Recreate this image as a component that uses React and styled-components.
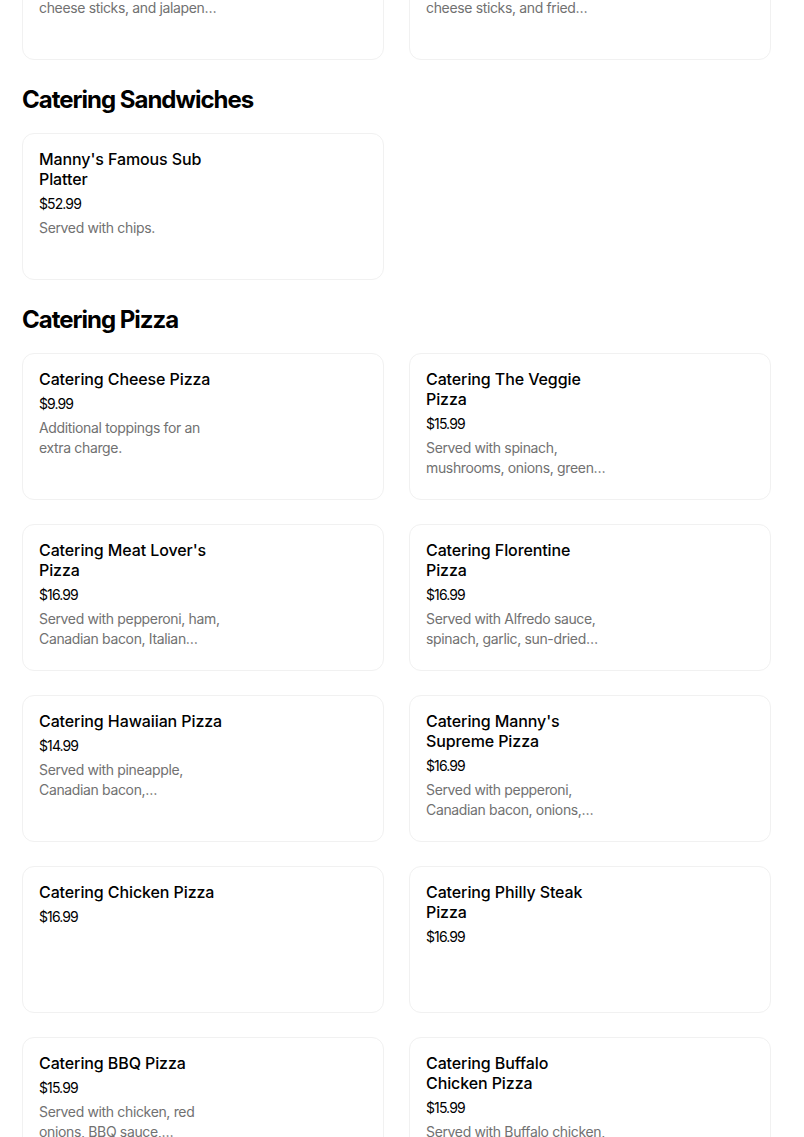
import styled, { createGlobalStyle } from "styled-components";

const GlobalStyle = createGlobalStyle`
  html, body {
    margin: 0;
    padding: 0;
    background: #ffffff;
  }
  body {
    font-family: Inter, "Liberation Sans", sans-serif;
    color: #000000;
    overflow: hidden;
  }
`;

const Page = styled.div`
  width: 804px;
  height: 1137px;
  overflow: hidden;
`;

// the page is scrolled: the previous section's last row is half off-screen
const Scroller = styled.div`
  margin-top: -87px;
  padding: 0 33px 0 22px;
`;

const Section = styled.section``;

const Heading = styled.h2`
  margin: 24px 0 17px;
  font-size: 24px;
  line-height: 32px;
  font-weight: 700;
  letter-spacing: -1px;
`;

const Grid = styled.div`
  display: grid;
  grid-template-columns: repeat(2, 1fr);
  gap: 24px 25px;
`;

const Card = styled.div`
  height: 147px;
  box-sizing: border-box;
  border: 1px solid #f1f1f1;
  border-radius: 12px;
  padding: 15px 16px 16px;
  display: flex;
  background: #ffffff;
`;

const Info = styled.div`
  width: 185px;
  display: flex;
  flex-direction: column;
`;

const Title = styled.div`
  font-size: 16px;
  line-height: 20px;
  font-weight: 500;
  letter-spacing: -0.1px;
  margin-bottom: 5px;
`;

const Price = styled.div`
  font-size: 14px;
  line-height: 20px;
  letter-spacing: -0.9px;
  margin-bottom: 4px;
`;

const Desc = styled.div`
  font-size: 14px;
  line-height: 20px;
  color: #717171;
  letter-spacing: -0.35px;
  display: -webkit-box;
  -webkit-line-clamp: 2;
  -webkit-box-orient: vertical;
  overflow: hidden;
`;

const sections = [
  {
    name: null,
    items: [
      {
        title: "Catering Appetizer Tray",
        price: "$39.99",
        desc: "Served with chicken tenders, cheese sticks, and jalapeno poppers.",
      },
      {
        title: "Catering Party Tray",
        price: "$44.99",
        desc: "Served with chicken wings, cheese sticks, and fried mushrooms.",
      },
    ],
  },
  {
    name: "Catering Sandwiches",
    items: [
      { title: "Manny's Famous Sub Platter", price: "$52.99", desc: "Served with chips." },
    ],
  },
  {
    name: "Catering Pizza",
    items: [
      { title: "Catering Cheese Pizza", price: "$9.99", desc: "Additional toppings for an extra charge." },
      {
        title: "Catering The Veggie Pizza",
        price: "$15.99",
        desc: "Served with spinach, mushrooms, onions, green peppers, tomatoes, and black olives.",
      },
      {
        title: "Catering Meat Lover's Pizza",
        price: "$16.99",
        desc: "Served with pepperoni, ham, Canadian bacon, Italian sausage, and ground beef.",
      },
      {
        title: "Catering Florentine Pizza",
        price: "$16.99",
        desc: "Served with Alfredo sauce, spinach, garlic, sun-dried tomatoes, and feta cheese.",
      },
      {
        title: "Catering Hawaiian Pizza",
        price: "$14.99",
        desc: "Served with pineapple, Canadian bacon, caramelized onions.",
      },
      {
        title: "Catering Manny's Supreme Pizza",
        price: "$16.99",
        desc: "Served with pepperoni, Canadian bacon, onions, green peppers, and mushrooms.",
      },
      { title: "Catering Chicken Pizza", price: "$16.99" },
      { title: "Catering Philly Steak Pizza", price: "$16.99" },
      {
        title: "Catering BBQ Pizza",
        price: "$15.99",
        desc: "Served with chicken, red onions, BBQ sauce, mozzarella, and cheddar.",
      },
      {
        title: "Catering Buffalo Chicken Pizza",
        price: "$15.99",
        desc: "Served with Buffalo chicken, red onions, and ranch sauce.",
      },
    ],
  },
];

const MenuCard = ({ item }) => (
  <Card>
    <Info>
      <Title>{item.title}</Title>
      <Price>{item.price}</Price>
      {item.desc && <Desc>{item.desc}</Desc>}
    </Info>
  </Card>
);

export default function App() {
  return (
    <Page>
      <GlobalStyle />
      <Scroller>
        {sections.map((section, i) => (
          <Section key={i}>
            {section.name && <Heading>{section.name}</Heading>}
            <Grid>
              {section.items.map((item) => (
                <MenuCard key={item.title} item={item} />
              ))}
            </Grid>
          </Section>
        ))}
      </Scroller>
    </Page>
  );
}
